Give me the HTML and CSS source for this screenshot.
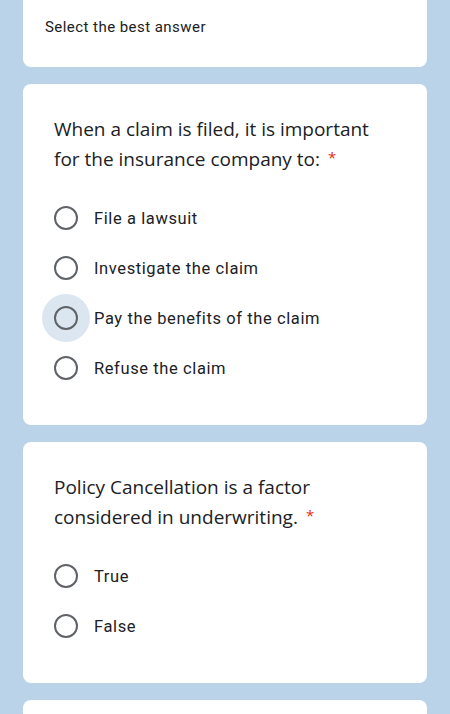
FILE: index.html
```html
<!DOCTYPE html>
<html lang="en">
<head>
    <meta charset="UTF-8">
    <meta name="viewport" content="width=device-width, initial-scale=1.0">
    <title>Quiz</title>
    <link rel="stylesheet" href="styles.css">
</head>
<body>
    <div class="form">
        <div class="card header-card">
            <div class="hint">Select the best answer</div>
        </div>

        <div class="card question">
            <div class="title">When a claim is filed, it is important<br>for the insurance company to:<span class="req">*</span></div>
            <div class="options">
                <label class="option"><span class="radio"></span>File a lawsuit</label>
                <label class="option"><span class="radio"></span>Investigate the claim</label>
                <label class="option focused"><span class="radio"></span>Pay the benefits of the claim</label>
                <label class="option"><span class="radio"></span>Refuse the claim</label>
            </div>
        </div>

        <div class="card question">
            <div class="title">Policy Cancellation is a factor<br>considered in underwriting.<span class="req">*</span></div>
            <div class="options">
                <label class="option"><span class="radio"></span>True</label>
                <label class="option"><span class="radio"></span>False</label>
            </div>
        </div>

        <div class="card question"></div>
    </div>
</body>
</html>
```

FILE: styles.css
```css
body {
    margin: 0;
    background-color: #bad3e8;
    font-family: Roboto, "Liberation Sans", sans-serif;
    color: #202124;
    overflow: hidden;
}

.form {
    padding: 0 23px;
}

.card {
    background-color: white;
    border-radius: 8px;
    margin-bottom: 17px;
}

.header-card {
    margin-top: -10px;
    padding: 27px 22px 30px;
}

.hint {
    font-size: 15px;
    line-height: 20px;
    letter-spacing: 0.45px;
}

.question {
    padding: 30px 31px 32px;
}

.title {
    font-family: "Open Sans", Roboto, sans-serif;
    font-size: 19px;
    line-height: 30px;
    white-space: nowrap;
}

.req {
    display: inline-block;
    color: #d93025;
    font-size: 15px;
    line-height: 12px;
    margin-left: 8px;
    vertical-align: 3px;
}

.options {
    margin-top: 19px;
}

.option {
    display: flex;
    align-items: center;
    gap: 16px;
    height: 50px;
    font-size: 16.5px;
    letter-spacing: 0.6px;
}

.radio {
    width: 20px;
    height: 20px;
    border: 2px solid #5f6368;
    border-radius: 50%;
    flex-shrink: 0;
}

.option.focused .radio {
    background-color: #dce6f0;
    box-shadow: 0 0 0 12px #dce6f0;
}
```
